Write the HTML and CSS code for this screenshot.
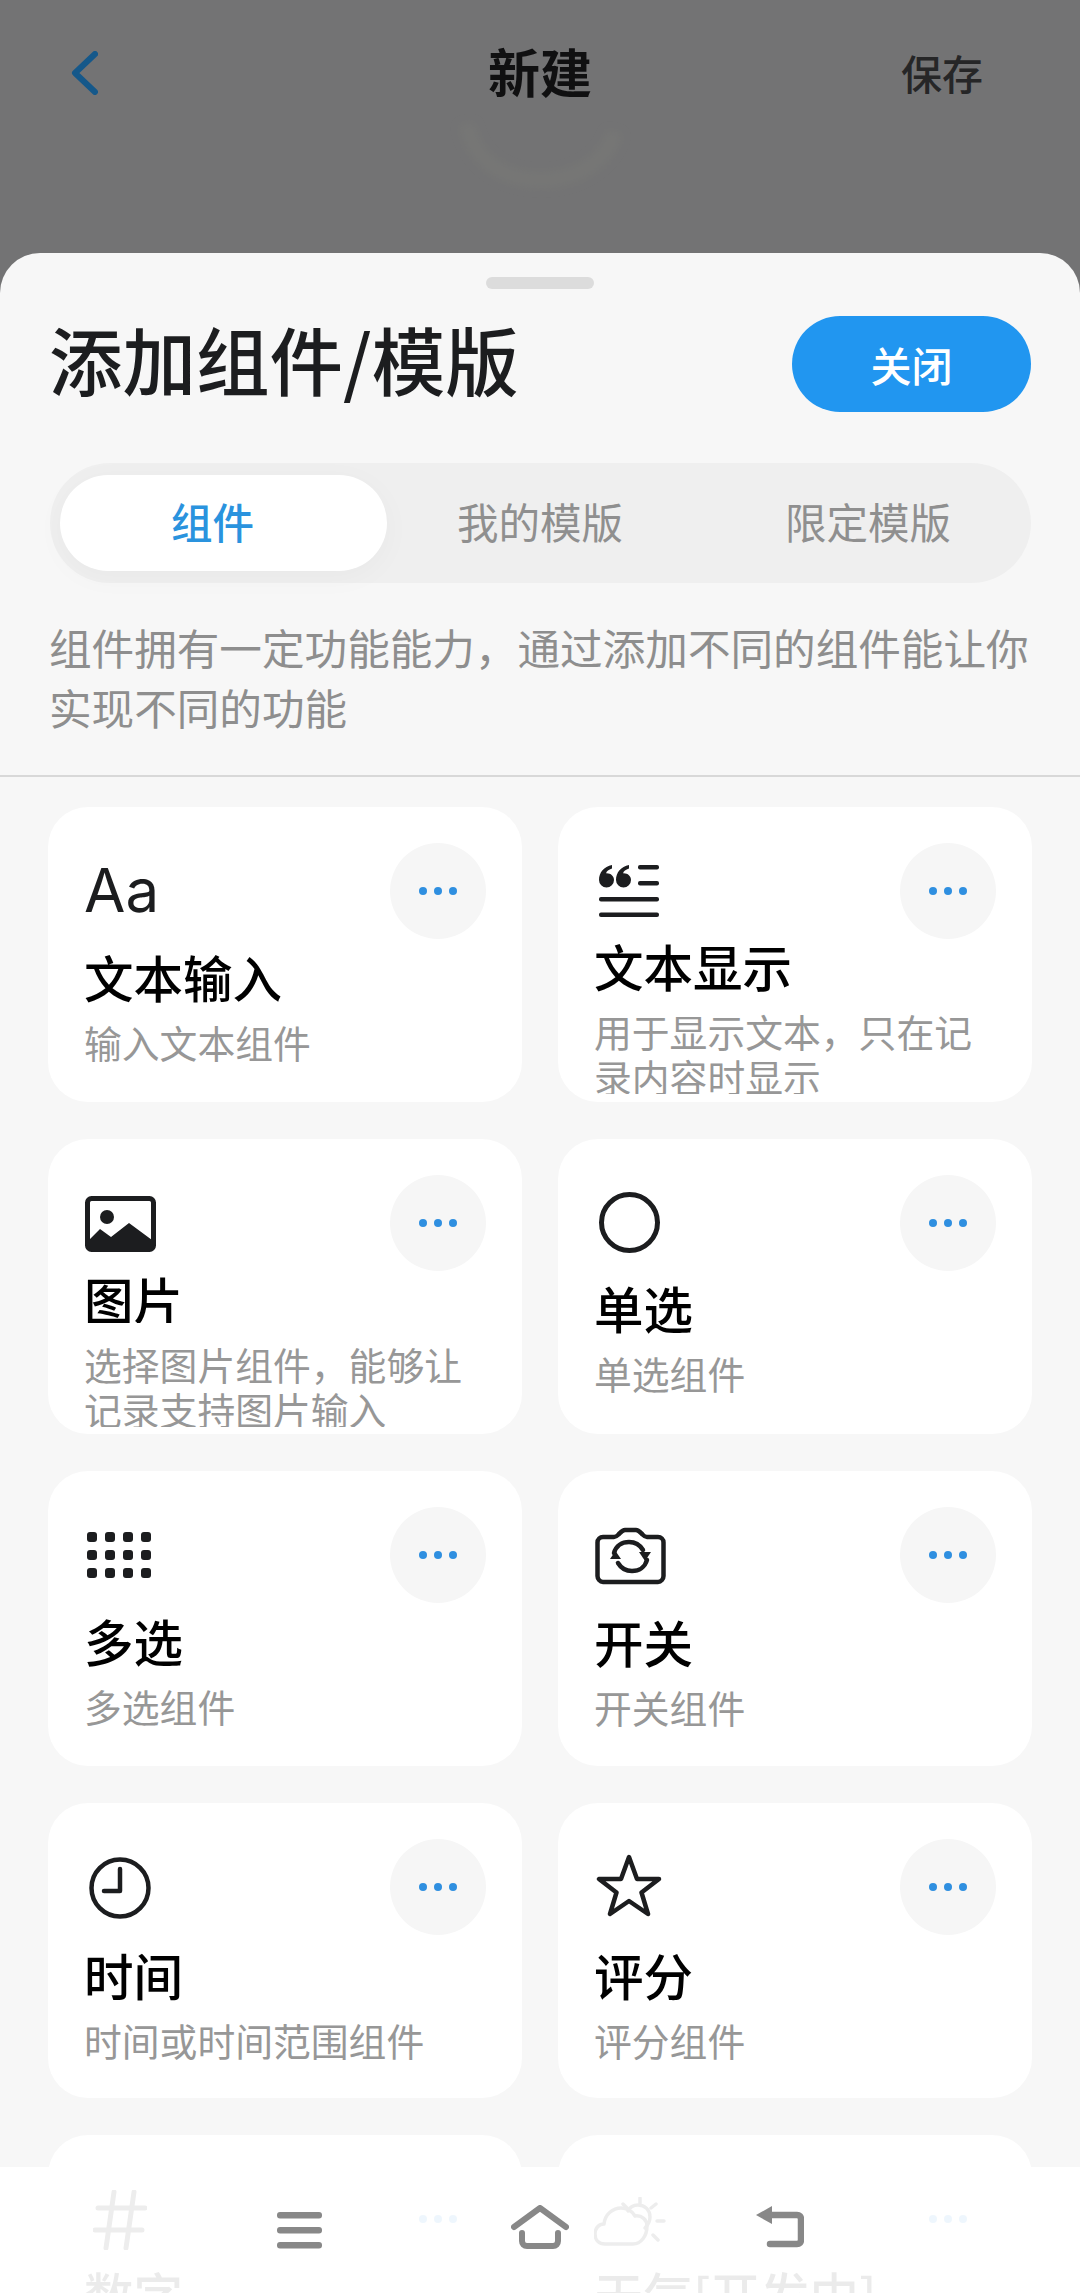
FILE: index.html
```html
<!DOCTYPE html>
<html lang="zh-CN">
<head>
    <meta charset="UTF-8">
    <meta name="viewport" content="width=device-width, initial-scale=1.0">
    <title>添加组件/模版</title>
    <link rel="stylesheet" href="styles.css">
</head>
<body>
    <div class="screen">
        <!-- Dimmed Page Behind the Sheet -->
        <header class="topbar">
            <svg class="back-icon" viewBox="0 0 27 44" fill="none"><path d="M24 3 4 22l20 19" /></svg>
            <h1 class="topbar-title">新建</h1>
            <span class="topbar-save">保存</span>
            <svg class="topbar-ghost" viewBox="0 0 164 78" fill="none"><path d="M8 14c6 36 36 56 74 56s66-20 74-48" /></svg>
        </header>

        <!-- Bottom Sheet -->
        <section class="sheet">
            <div class="handle"></div>

            <div class="sheet-head">
                <h2 class="sheet-title">添加组件/模版</h2>
                <button class="close-btn">关闭</button>
            </div>

            <div class="tabs">
                <span class="tab tab-active">组件</span>
                <span class="tab tab-mine">我的模版</span>
                <span class="tab tab-limited">限定模版</span>
            </div>

            <p class="sheet-desc">组件拥有一定功能能力，通过添加不同的组件能让你实现不同的功能</p>

            <div class="cards">
                <div class="card">
                    <button class="more-btn"><i></i><i></i><i></i></button>
                    <div class="slot slot-aa"><span class="aa">Aa</span></div>
                    <div class="card-title">文本输入</div>
                    <div class="card-sub">输入文本组件</div>
                </div>

                <div class="card">
                    <button class="more-btn"><i></i><i></i><i></i></button>
                    <div class="slot slot-quote">
                        <svg width="61" height="52" viewBox="0 0 61 52" fill="#1c1d1f">
                            <path d="M13 0v3.600C9.600 4.600 7.600 6.400 7 8.400c4.400-.4 8 2.600 8 6.600a7.500 7.500 0 0 1-15 0C0 7.500 5 1.500 13 0Z" />
                            <path d="M30 0v3.600c-3.400 1-5.400 2.800-6 4.800 4.400-.4 8 2.600 8 6.600a7.500 7.500 0 0 1-15 0C17 7.500 22 1.500 30 0Z" />
                            <rect x="39" y="0" width="21" height="4.500" rx="2" />
                            <rect x="39" y="16" width="21" height="4.500" rx="2" />
                            <rect x="0" y="32" width="60" height="4.500" rx="2" />
                            <rect x="0" y="47.500" width="60" height="4.500" rx="2" />
                        </svg>
                    </div>
                    <div class="card-title">文本显示</div>
                    <div class="card-sub">用于显示文本，只在记录内容时显示</div>
                </div>

                <div class="card">
                    <button class="more-btn"><i></i><i></i><i></i></button>
                    <div class="slot slot-image">
                        <svg width="71" height="56" viewBox="0 0 71 56">
                            <rect x="2.500" y="2.500" width="66" height="51" rx="4" fill="none" stroke="#1c1d1f" stroke-width="5" />
                            <circle cx="22" cy="21" r="7" fill="#1c1d1f" />
                            <path d="M4 44 15 33l11 8 18-14 23 17v8a3 3 0 0 1-3 3H7a3 3 0 0 1-3-3Z" fill="#1c1d1f" />
                        </svg>
                    </div>
                    <div class="card-title card-title-cut">图片</div>
                    <div class="card-sub">选择图片组件，能够让记录支持图片输入</div>
                </div>

                <div class="card">
                    <button class="more-btn"><i></i><i></i><i></i></button>
                    <div class="slot slot-circle">
                        <svg width="61" height="61" viewBox="0 0 61 61" fill="none"><circle cx="30.500" cy="30.500" r="28" stroke="#1c1d1f" stroke-width="5" /></svg>
                    </div>
                    <div class="card-title">单选</div>
                    <div class="card-sub">单选组件</div>
                </div>

                <div class="card">
                    <button class="more-btn"><i></i><i></i><i></i></button>
                    <div class="slot slot-grid">
                        <div class="dot-grid">
                            <i></i><i></i><i></i><i></i>
                            <i></i><i></i><i></i><i></i>
                            <i></i><i></i><i></i><i></i>
                        </div>
                    </div>
                    <div class="card-title">多选</div>
                    <div class="card-sub">多选组件</div>
                </div>

                <div class="card">
                    <button class="more-btn"><i></i><i></i><i></i></button>
                    <div class="slot slot-camera">
                        <svg width="71" height="58" viewBox="0 0 71 58" fill="none" stroke="#1c1d1f" stroke-width="4.500" stroke-linejoin="round">
                            <path d="M8 10h11c2 0 3-1 4.500-2.500C26 5 27.500 3 30 3h11c2.500 0 4 2 6.500 4.500C49 9 50 10 52 10h11c3 0 5.500 2.500 5.500 5.500V49c0 3-2.500 6-5.500 6H8c-3 0-5.500-3-5.500-6V15.500C2.500 12.500 5 10 8 10Z" />
                            <path d="M19 26c2-7 8-11 15-11 6 0 11 3 14 8" stroke-linecap="round" />
                            <path d="M52 33c-2 7-8 11-15 11-6 0-11-3-14-8" stroke-linecap="round" />
                            <path d="M15 32h11l-5.500-8Z" fill="#1c1d1f" stroke="none" />
                            <path d="M44 25h12l-6 9Z" fill="#1c1d1f" stroke="none" />
                        </svg>
                    </div>
                    <div class="card-title">开关</div>
                    <div class="card-sub">开关组件</div>
                </div>

                <div class="card">
                    <button class="more-btn"><i></i><i></i><i></i></button>
                    <div class="slot slot-clock">
                        <svg width="62" height="62" viewBox="0 0 62 62" fill="none" stroke="#1c1d1f" stroke-width="4.500" stroke-linecap="round" stroke-linejoin="round">
                            <circle cx="31" cy="31" r="28.500" />
                            <path d="M31 12v22H15" />
                        </svg>
                    </div>
                    <div class="card-title">时间</div>
                    <div class="card-sub">时间或时间范围组件</div>
                </div>

                <div class="card">
                    <button class="more-btn"><i></i><i></i><i></i></button>
                    <div class="slot slot-star">
                        <svg width="66" height="64" viewBox="0 0 66 64" fill="none"><path d="M33 3l8 22h22L45.500 38.500 52 60 33 47 14 60l6.500-21.500L3 25h22Z" stroke="#1c1d1f" stroke-width="4.500" stroke-linejoin="round" /></svg>
                    </div>
                    <div class="card-title">评分</div>
                    <div class="card-sub">评分组件</div>
                </div>

                <div class="card">
                    <button class="more-btn"><i></i><i></i><i></i></button>
                    <div class="slot slot-number">
                        <svg width="54" height="60" viewBox="0 0 54 60" fill="none" stroke="#1c1d1f" stroke-width="5" stroke-linecap="round">
                            <path d="M21 2 13 58M41 2l-8 56M5 18h47M2 40h47" />
                        </svg>
                    </div>
                    <div class="card-title">数字</div>
                    <div class="card-sub">数字组件</div>
                </div>

                <div class="card">
                    <button class="more-btn"><i></i><i></i><i></i></button>
                    <div class="slot slot-weather">
                        <svg width="72" height="50" viewBox="0 0 72 50" fill="none" stroke="#1c1d1f" stroke-width="3.500" stroke-linecap="round" stroke-linejoin="round">
                            <path d="M11 47C5 47 1 43 1 37s4-10 9-10c1-10 9-16 17-16 6 0 11 3 14 8 7-1 12 4 12 10 0 10-6 18-14 18Z" />
                            <path d="M34 14c2-4 6-6 10-6 7 0 12 5 12 12 0 5-2 8-5 11" />
                            <path d="M46 1v5M29 7l4 4M62 7l-5 4M63 24h7M59 38l5 5" />
                        </svg>
                    </div>
                    <div class="card-title">天气[开发中]</div>
                    <div class="card-sub">天气组件</div>
                </div>
            </div>
        </section>

        <!-- System Navigation Bar -->
        <nav class="navbar">
            <svg class="nav-menu" width="45" height="37" viewBox="0 0 45 37" fill="#888">
                <rect x="0" y="0" width="45" height="6.500" rx="3" />
                <rect x="0" y="15" width="45" height="6.500" rx="3" />
                <rect x="0" y="30" width="45" height="6.500" rx="3" />
            </svg>
            <svg class="nav-home" width="58" height="44" viewBox="0 0 58 44" fill="none" stroke="#888" stroke-width="6" stroke-linecap="round" stroke-linejoin="round">
                <path d="M3 22 29 3l26 19" />
                <path d="M11 28v8c0 3 2 5 5 5h26c3 0 5-2 5-5v-8" />
            </svg>
            <svg class="nav-back" width="48" height="42" viewBox="0 0 48 42" fill="none">
                <path d="M16 0 0 9l16 9Z" fill="#888" />
                <path d="M10 9h31c2.500 0 4 1.500 4 4v21c0 2.500-1.500 4-4 4H14" stroke="#888" stroke-width="6.500" stroke-linecap="round" />
            </svg>
        </nav>
    </div>
</body>
</html>
```

FILE: styles.css
```css
/* General Page Styling */
html, body {
    margin: 0;
    padding: 0;
    background: #737374;
}

body {
    font-family: "Noto Sans CJK SC", "Noto Sans", sans-serif;
    color: #1c1d1f;
}

.screen {
    position: relative;
    width: 1080px;
    height: 2293px;
    overflow: hidden;
    display: flex;
    flex-direction: column;
}

button {
    border: none;
    padding: 0;
    font-family: inherit;
}

/* Dimmed Top Bar */
.topbar {
    position: relative;
    flex: 0 0 253px;
    display: grid;
    grid-template-columns: 1fr auto 1fr;
    align-items: start;
    padding: 51px 71px 0 71px;
    box-sizing: border-box;
}

.back-icon {
    width: 27px;
    height: 44px;
}

    .back-icon path {
        stroke: #15588a;
        stroke-width: 6;
        stroke-linecap: round;
        stroke-linejoin: round;
    }

.topbar-title {
    margin: -17px 0 0 0;
    font-size: 52px;
    line-height: 74px;
    font-weight: 700;
    color: #101011;
}

.topbar-save {
    justify-self: end;
    margin: -10px 26px 0 0;
    font-size: 41px;
    line-height: 62px;
    font-weight: 500;
    color: #262627;
}

.topbar-ghost {
    position: absolute;
    left: 459px;
    top: 110px;
    width: 164px;
    height: 78px;
    opacity: .35;
    filter: blur(5px);
}

    .topbar-ghost path {
        stroke: #7d7e78;
        stroke-width: 16;
    }

/* Bottom Sheet */
.sheet {
    flex: 1 0 auto;
    background: #f7f7f7;
    border-radius: 40px 40px 0 0;
}

.handle {
    width: 108px;
    height: 12px;
    margin: 24px auto 0;
    border-radius: 6px;
    background: #dcdcdc;
}

.sheet-head {
    display: flex;
    align-items: center;
    justify-content: space-between;
    margin-top: 27px;
    padding: 0 49px 0 49px;
}

.sheet-title {
    margin: 0;
    padding-bottom: 12px;
    font-size: 73.5px;
    line-height: 84px;
    font-weight: 500;
    color: #1c1d1f;
}

.close-btn {
    width: 239px;
    height: 96px;
    border-radius: 48px;
    background: #2196f0;
    color: #ffffff;
    font-size: 41px;
    font-weight: 500;
}

/* Tabs */
.tabs {
    display: flex;
    height: 120px;
    margin: 51px 49px 0 50px;
    padding: 12px 0 12px 10px;
    box-sizing: border-box;
    border-radius: 60px;
    background: #efefef;
}

.tab {
    display: flex;
    align-items: center;
    justify-content: center;
    box-sizing: border-box;
    flex: none;
    height: 96px;
    padding-bottom: 5px;
    font-size: 41.5px;
    color: #8f8f8f;
}

.tab-active {
    width: 327px;
    padding-right: 22px;
    border-radius: 48px;
    background: #ffffff;
    box-shadow: 0 6px 30px rgba(0, 0, 0, 0.03);
    color: #2a93de;
    font-weight: 500;
}

.tab-mine {
    width: 306px;
}

.tab-limited {
    width: 326px;
    margin-left: 12px;
}

.sheet-desc {
    margin: 34px 0 0 0;
    padding: 0 48px 38px 49px;
    border-bottom: 2px solid #d8d8d8;
    font-size: 42.6px;
    line-height: 60px;
    color: #8e8e8e;
}

/* Component Cards */
.cards {
    display: grid;
    grid-template-columns: 474px 474px;
    grid-auto-rows: 295px;
    column-gap: 36px;
    row-gap: 37px;
    padding: 30px 0 0 48px;
}

.card {
    position: relative;
    padding: 0 36px;
    border-radius: 40px;
    background: #ffffff;
    overflow: hidden;
}

.more-btn {
    position: absolute;
    top: 36px;
    right: 36px;
    display: flex;
    align-items: center;
    justify-content: center;
    gap: 7px;
    width: 96px;
    height: 96px;
    border-radius: 50%;
    background: #f6f6f6;
}

    .more-btn i {
        width: 8px;
        height: 8px;
        border-radius: 50%;
        background: #2f8fe0;
    }

/* Icon slots: each icon sits at its own height above the title */
.slot {
    box-sizing: border-box;
}

.slot-aa {
    height: 143px;
    padding-top: 49px;
}

.aa {
    display: block;
    font-family: Inter, sans-serif;
    font-size: 60px;
    line-height: 68px;
    color: #1c1d1f;
}

.slot-quote {
    height: 132px;
    padding: 58px 0 0 5px;
}

.slot-image {
    height: 133px;
    padding: 57px 0 0 1px;
}

.slot-circle {
    height: 142px;
    padding: 53px 0 0 5px;
}

.slot-grid {
    height: 143px;
    padding: 61px 0 0 3px;
}

.slot-camera {
    height: 144px;
    padding: 56px 0 0 1px;
}

.slot-clock {
    height: 145px;
    padding: 54px 0 0 5px;
}

.slot-star {
    height: 145px;
    padding: 51px 0 0 2px;
}

.slot-number {
    height: 132px;
    padding: 55px 0 0 9px;
}

.slot-weather {
    height: 132px;
    padding-top: 62px;
}

.dot-grid {
    display: grid;
    grid-template-columns: repeat(4, 10px);
    grid-auto-rows: 10px;
    gap: 8px;
}

    .dot-grid i {
        border-radius: 3px;
        background: #1c1d1f;
    }

.card-title {
    height: 60px;
    margin: -3px 0 12px 0;
    font-size: 49.5px;
    line-height: 60px;
    font-weight: 500;
    color: #000000;
    white-space: nowrap;
}

.card-title-cut {
    height: 54px;
    margin-bottom: 18px;
    overflow: hidden;
}

.card-sub {
    height: 86px;
    overflow: hidden;
    font-size: 37.8px;
    line-height: 45px;
    color: #979797;
}

/* Navigation Bar */
.navbar {
    position: absolute;
    left: 0;
    right: 0;
    bottom: 0;
    height: 126px;
    background: rgba(255, 255, 255, 0.92);
}

    .navbar svg {
        position: absolute;
    }

.nav-menu {
    left: 277px;
    top: 45px;
}

.nav-home {
    left: 511px;
    top: 38px;
}

.nav-back {
    left: 756px;
    top: 39px;
}
```
